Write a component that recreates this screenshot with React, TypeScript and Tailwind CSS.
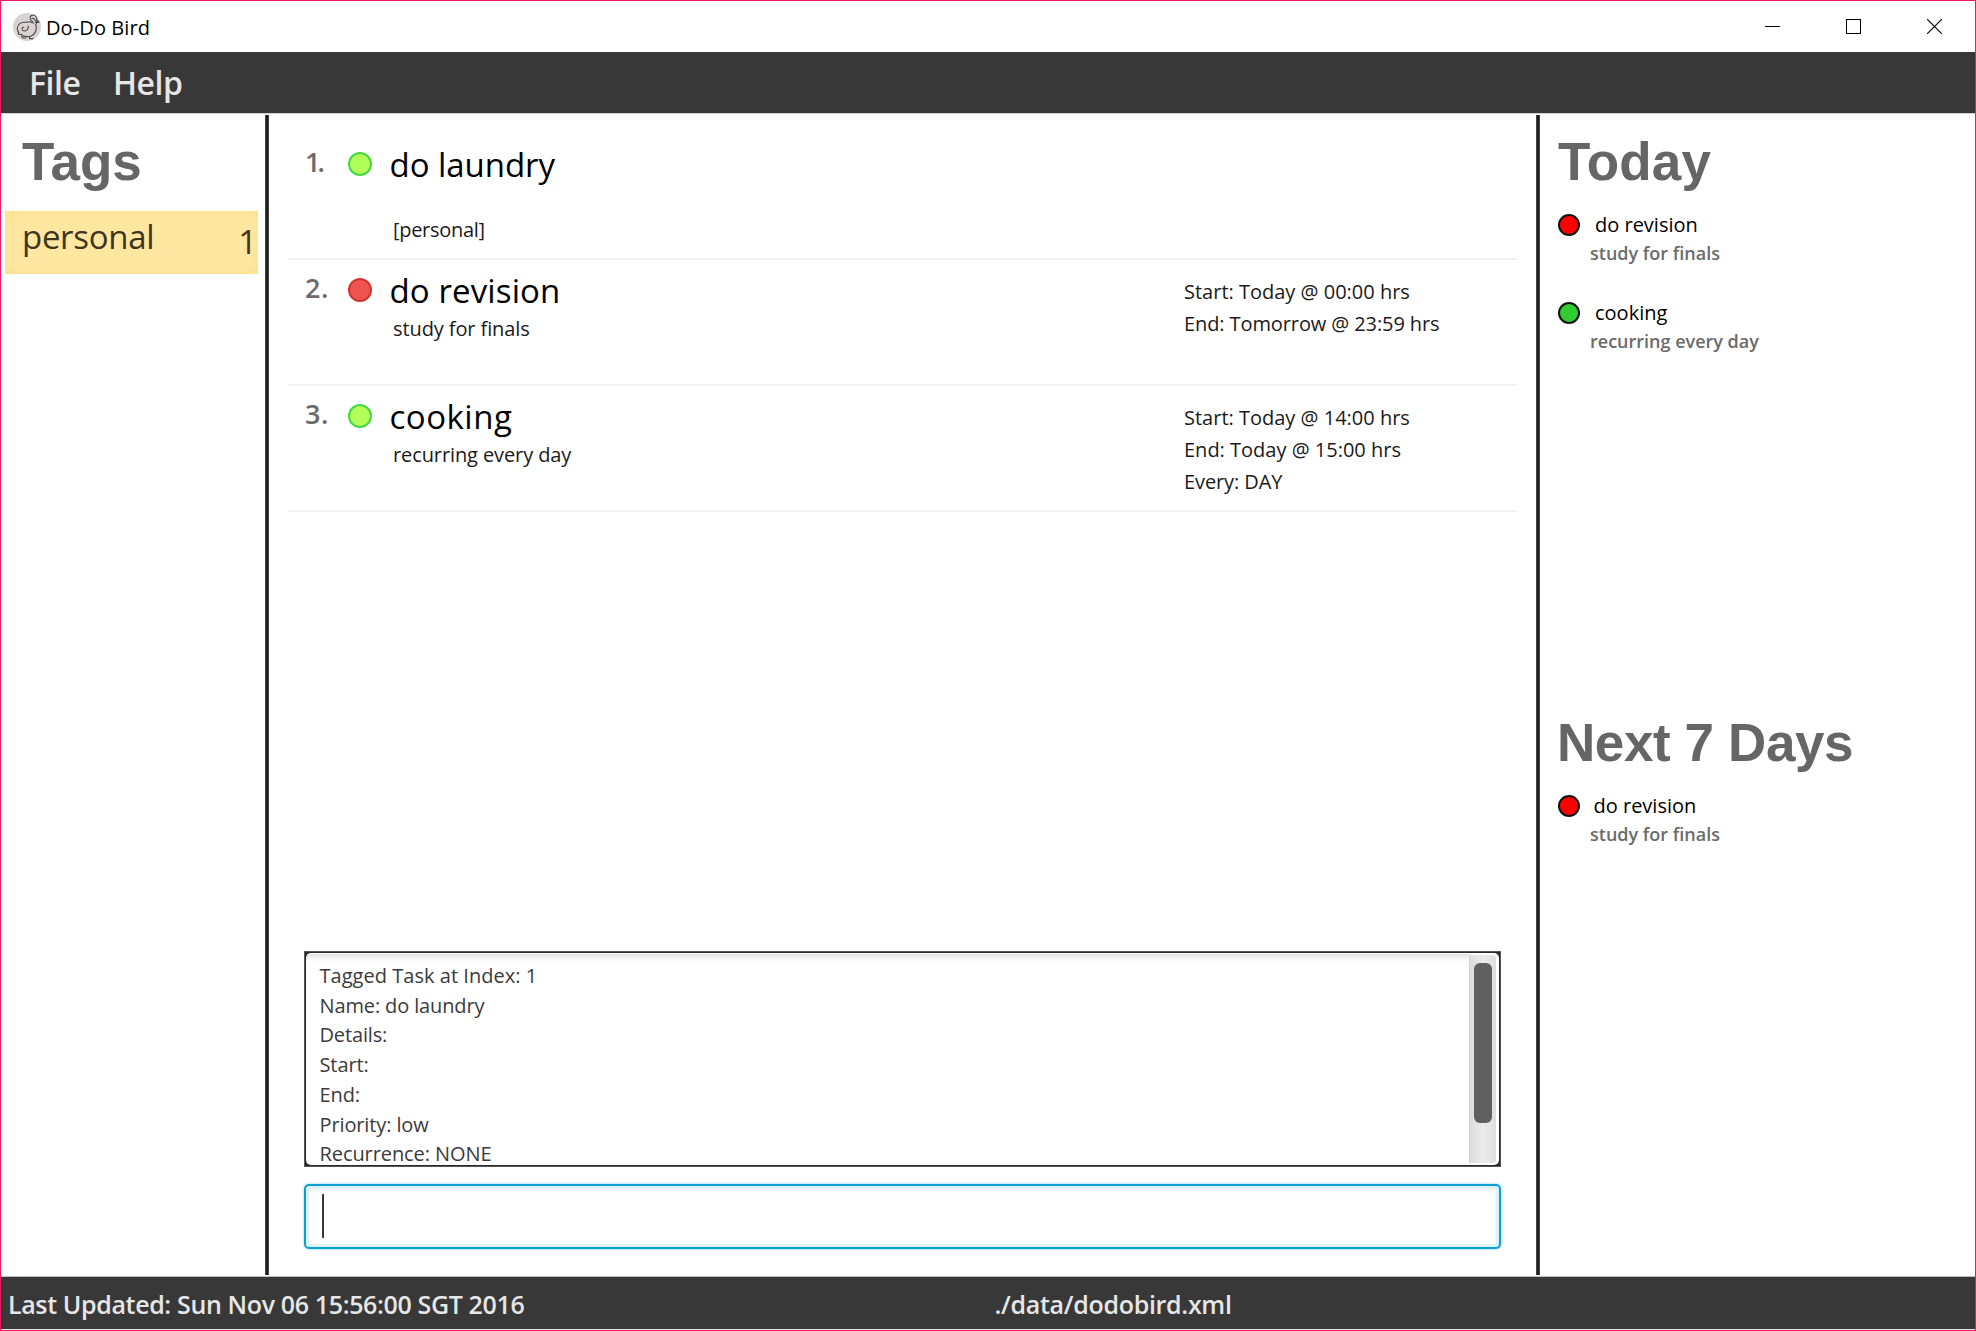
import React from 'react';

type Task = {
  no: string;
  noClass: string;
  dot: string;
  name: string;
  nameClass: string;
  details: string;
  tags: string;
  dates: { text: string; cls: string }[];
};

const GREEN = 'bg-[#b2ff59] border-[#43d843]';
const RED = 'bg-[#ef5350] border-[#d33333]';

const tasks: Task[] = [
  { no: '1.', noClass: 'tracking-[-3px]', dot: GREEN, name: 'do laundry', nameClass: 'tracking-[-0.05px]', details: '', tags: '[personal]', dates: [] },
  {
    no: '2.', noClass: 'tracking-[0.5px]', dot: RED, name: 'do revision', nameClass: 'tracking-[0.12px]', details: 'study for finals', tags: '',
    dates: [
      { text: 'Start: Today @ 00:00 hrs', cls: '' },
      { text: 'End: Tomorrow @ 23:59 hrs', cls: 'tracking-[-0.1px]' },
    ],
  },
  {
    no: '3.', noClass: 'tracking-[0.5px]', dot: GREEN, name: 'cooking', nameClass: 'tracking-[0.5px]', details: 'recurring every day', tags: '',
    dates: [
      { text: 'Start: Today @ 14:00 hrs', cls: '' },
      { text: 'End: Today @ 15:00 hrs', cls: '' },
      { text: 'Every: DAY', cls: 'tracking-[-0.1px]' },
    ],
  },
];

const log: { text: string; cls: string }[] = [
  { text: 'Tagged Task at Index: 1', cls: 'tracking-[0.03px]' },
  { text: 'Name: do laundry', cls: 'tracking-[-0.13px]' },
  { text: 'Details:', cls: 'tracking-[-0.15px]' },
  { text: 'Start:', cls: 'tracking-[-0.1px]' },
  { text: 'End:', cls: 'tracking-[-0.1px]' },
  { text: 'Priority: low', cls: 'tracking-[-0.12px]' },
  { text: 'Recurrence: NONE', cls: 'tracking-[-0.08px]' },
];

function Logo() {
  return (
    <svg className="size-7" viewBox="0 0 28 28" fill="none" stroke="#4a4444" strokeWidth="1.1" strokeLinecap="round" strokeLinejoin="round">
      <circle cx="14" cy="14" r="14" fill="#d8d3d2" stroke="none" />
      <path d="M22.700 12C24.500 10 24.800 4.500 22 2.600C19.500 1.200 16.800 2.600 17.100 5.200C17.400 7.600 20 8.300 20.300 10.500" />
      <path d="M19 5.500C20.500 4.600 21.500 6 22.300 7.500C24 8 26 7.500 26 9.500C25 8.700 23.800 9.300 22.400 9.400" />
      <path d="M18.500 9.500C16.500 7.800 14.800 9.500 12.600 9.300C8 8.700 4.500 11.500 4.300 15.300C4.200 17 5 18.500 5.800 19.600" />
      <path d="M22.700 12C24.500 16 22.500 21.500 17.500 23.200C13.500 24 9.500 23 8 21.200C6 22 4.500 20.600 5.800 19.600" />
      <path d="M15.300 13C15.800 16 13.300 18.500 10.500 17.800C8.200 17 8.600 14 10.800 14.200" />
      <path d="M8.500 23.500L10.500 25H13M16.500 23.500V25.600H20" />
    </svg>
  );
}

function SideItem({ color, name, nameClass, details }: { color: string; name: string; nameClass: string; details: string }) {
  return (
    <div className="flex h-[87.5px]">
      <div className={`mt-[3px] size-[22px] shrink-0 rounded-full border-2 border-[#111] ${color}`} />
      <div className="pt-px pl-[10px]">
        <div className={`text-[20px] leading-[26px] whitespace-nowrap text-black ${nameClass}`}>{name}</div>
        <div className="mt-px text-[18px] leading-[28px] font-semibold whitespace-nowrap text-[#6b6b6b]">{details}</div>
      </div>
    </div>
  );
}

function Heading({ children, className = '' }: { children: React.ReactNode; className?: string }) {
  return (
    <h2 className={`font-['Liberation_Sans',Arial,sans-serif] text-[53px] leading-[60px] font-bold whitespace-nowrap text-[#666] ${className}`}>
      {children}
    </h2>
  );
}

function Divider() {
  return <div className="mt-px mb-px w-1 shrink-0 border-x border-x-[#444] bg-[#1c1c1c]" />;
}

export default function App() {
  return (
    <div className="flex h-[1331px] w-[1976px] flex-col overflow-hidden border border-[#ec1a63] bg-white font-['Open_Sans','Noto_Sans',sans-serif]">
      <header className="flex h-[51px] shrink-0 items-center justify-between pr-[33px] pl-3">
        <div className="flex items-center gap-[5px]">
          <Logo />
          <span className="pt-[2px] text-[20px] leading-[28px] tracking-[0.1px] text-black">Do-Do Bird</span>
        </div>
        <div className="flex gap-[66px]">
          <svg width="15" height="15" viewBox="0 0 15 15" shapeRendering="crispEdges"><path d="M0 7.500H15" stroke="#000" /></svg>
          <svg width="15" height="15" viewBox="0 0 15 15" shapeRendering="crispEdges"><rect x=".5" y=".5" width="14" height="14" fill="none" stroke="#000" /></svg>
          <svg width="15" height="15" viewBox="0 0 15 15"><path d="M0 0L15 15M15 0L0 15" stroke="#000" strokeWidth="1.100" /></svg>
        </div>
      </header>

      <nav className="flex h-[62px] shrink-0 items-center border-b border-b-[#cfcfcf] bg-[#383838] pl-[28px] text-[32px] leading-[44px] font-semibold text-[#e6e6e6]">
        <span className="w-[84px] tracking-[-0.5px]">File</span>
        <span className="tracking-[-0.47px]">Help</span>
      </nav>

      <main className="flex h-[1162px] shrink-0">
        <aside className="w-[264px] shrink-0 pt-[18px]">
          <Heading className="pl-[21px]">Tags</Heading>
          <div className="mt-[19px] ml-[3.5px] flex h-[63px] w-[253.5px] justify-between bg-[#ffe7a2] pt-[8px] pr-px pl-[17.5px] text-[33px] leading-[36px] text-[#3d361c] shadow-[inset_0_0_12px_#ffdf8a]">
            <span className="tracking-[-0.3px]">personal</span>
            <span className="pt-[5px]">1</span>
          </div>
        </aside>
        <Divider />
        <section className="flex w-[1266.5px] shrink-0 flex-col pt-5 pb-[27px]">
          <div className="ml-[19px] flex-1">
            {tasks.map((t) => (
              <div key={t.no} className="flex h-[126px] w-[1229px] border-b-2 border-b-[#f0f2f2]">
                <div className={`w-[60px] shrink-0 pt-[12px] pl-[17px] text-[27px] leading-[32px] font-semibold whitespace-nowrap text-[#6b6b6b] ${t.noClass}`}>{t.no}</div>
                <div className={`mt-[18px] size-6 shrink-0 rounded-full border-2 ${t.dot}`} />
                <div className="ml-[17px] w-[795px] shrink-0 pt-[11px] whitespace-nowrap text-black">
                  <div className={`pl-[0.5px] text-[33px] leading-[40px] ${t.nameClass}`}>{t.name}</div>
                  <div className="mt-1 h-[27px] pl-1 text-[20px] leading-[27px] tracking-[-0.1px] text-[#1a1a1a]">{t.details}</div>
                  <div className="pl-1 text-[20px] leading-[27px] tracking-[-0.3px] text-[#1a1a1a]">{t.tags}</div>
                </div>
                <div className="pt-4 text-[20px] leading-[32px] whitespace-nowrap text-[#1a1a1a]">
                  {t.dates.map((d) => <div key={d.text} className={d.cls}>{d.text}</div>)}
                </div>
              </div>
            ))}
          </div>

          <div className="ml-[35px] h-[216px] w-[1197px] shrink-0 border border-[#555] bg-[#2a2a2a] p-px">
            <div className="flex h-full justify-between rounded-[5px] bg-white p-px">
              <div className="flex-1 pt-[7px] pl-[12.5px] text-[20px] leading-[29.7px] whitespace-nowrap text-[#3b3b3b] shadow-[inset_0_8px_6px_-5px_#ddd]">
                {log.map((l) => <div key={l.text} className={l.cls}>{l.text}</div>)}
              </div>
              <div className="mt-px mr-[2px] mb-px w-[27px] rounded-r-[3px] border-l border-l-[#d4d4d4] bg-linear-to-r from-[#dddddd] via-[#ececec] to-[#dedede] pt-2 pl-1">
                <div className="h-[160px] w-[18px] rounded-[6px] bg-[#606060]" />
              </div>
            </div>
          </div>

          <div className="mt-[17px] ml-[34.5px] h-[65px] w-[1197.5px] shrink-0 rounded-[5px] border-2 border-[#0a9fd5] bg-white pt-2 pl-4 shadow-[0_0_2px_1px_#c5e9f7,inset_0_0_0_3px_#dcf1fa,inset_0_6px_4px_-1px_#eef3f5]">
            <div className="h-[44px] w-[2px] bg-[#3a3a3a]" />
          </div>
        </section>
        <Divider />
        <aside className="flex w-[435.5px] shrink-0 flex-col pl-[18.5px]">
          <div className="h-[581px] pt-[18px]">
            <Heading className="tracking-[0.2px]">Today</Heading>
            <div className="pt-[19px]">
              <SideItem color="bg-[#ff0000]" name="do revision" nameClass="pl-[5px]" details="study for finals" />
              <SideItem color="bg-[#32cd32]" name="cooking" nameClass="pl-[5px]" details="recurring every day" />
            </div>
          </div>
          <div className="h-[581px] pt-[18px]">
            <Heading className="-ml-px tracking-[-0.4px]">Next 7 Days</Heading>
            <div className="pt-[19px]">
              <SideItem color="bg-[#ff0000]" name="do revision" nameClass="pl-[3.5px]" details="study for finals" />
            </div>
          </div>
        </aside>
      </main>

      <footer className="flex h-[53px] shrink-0 items-center border-t border-t-[#bdbdbd] bg-[#383838] pt-px pl-[7px] text-[25px] leading-[34px] font-semibold whitespace-nowrap text-[#e6e6e6]">
        <span className="w-[986.5px] tracking-[-0.36px]">Last Updated: Sun Nov 06 15:56:00 SGT 2016</span>
        <span className="tracking-[-0.3px]">./data/dodobird.xml</span>
      </footer>
      <div className="h-px shrink-0 bg-[#e8e8e8]" />
    </div>
  );
}
